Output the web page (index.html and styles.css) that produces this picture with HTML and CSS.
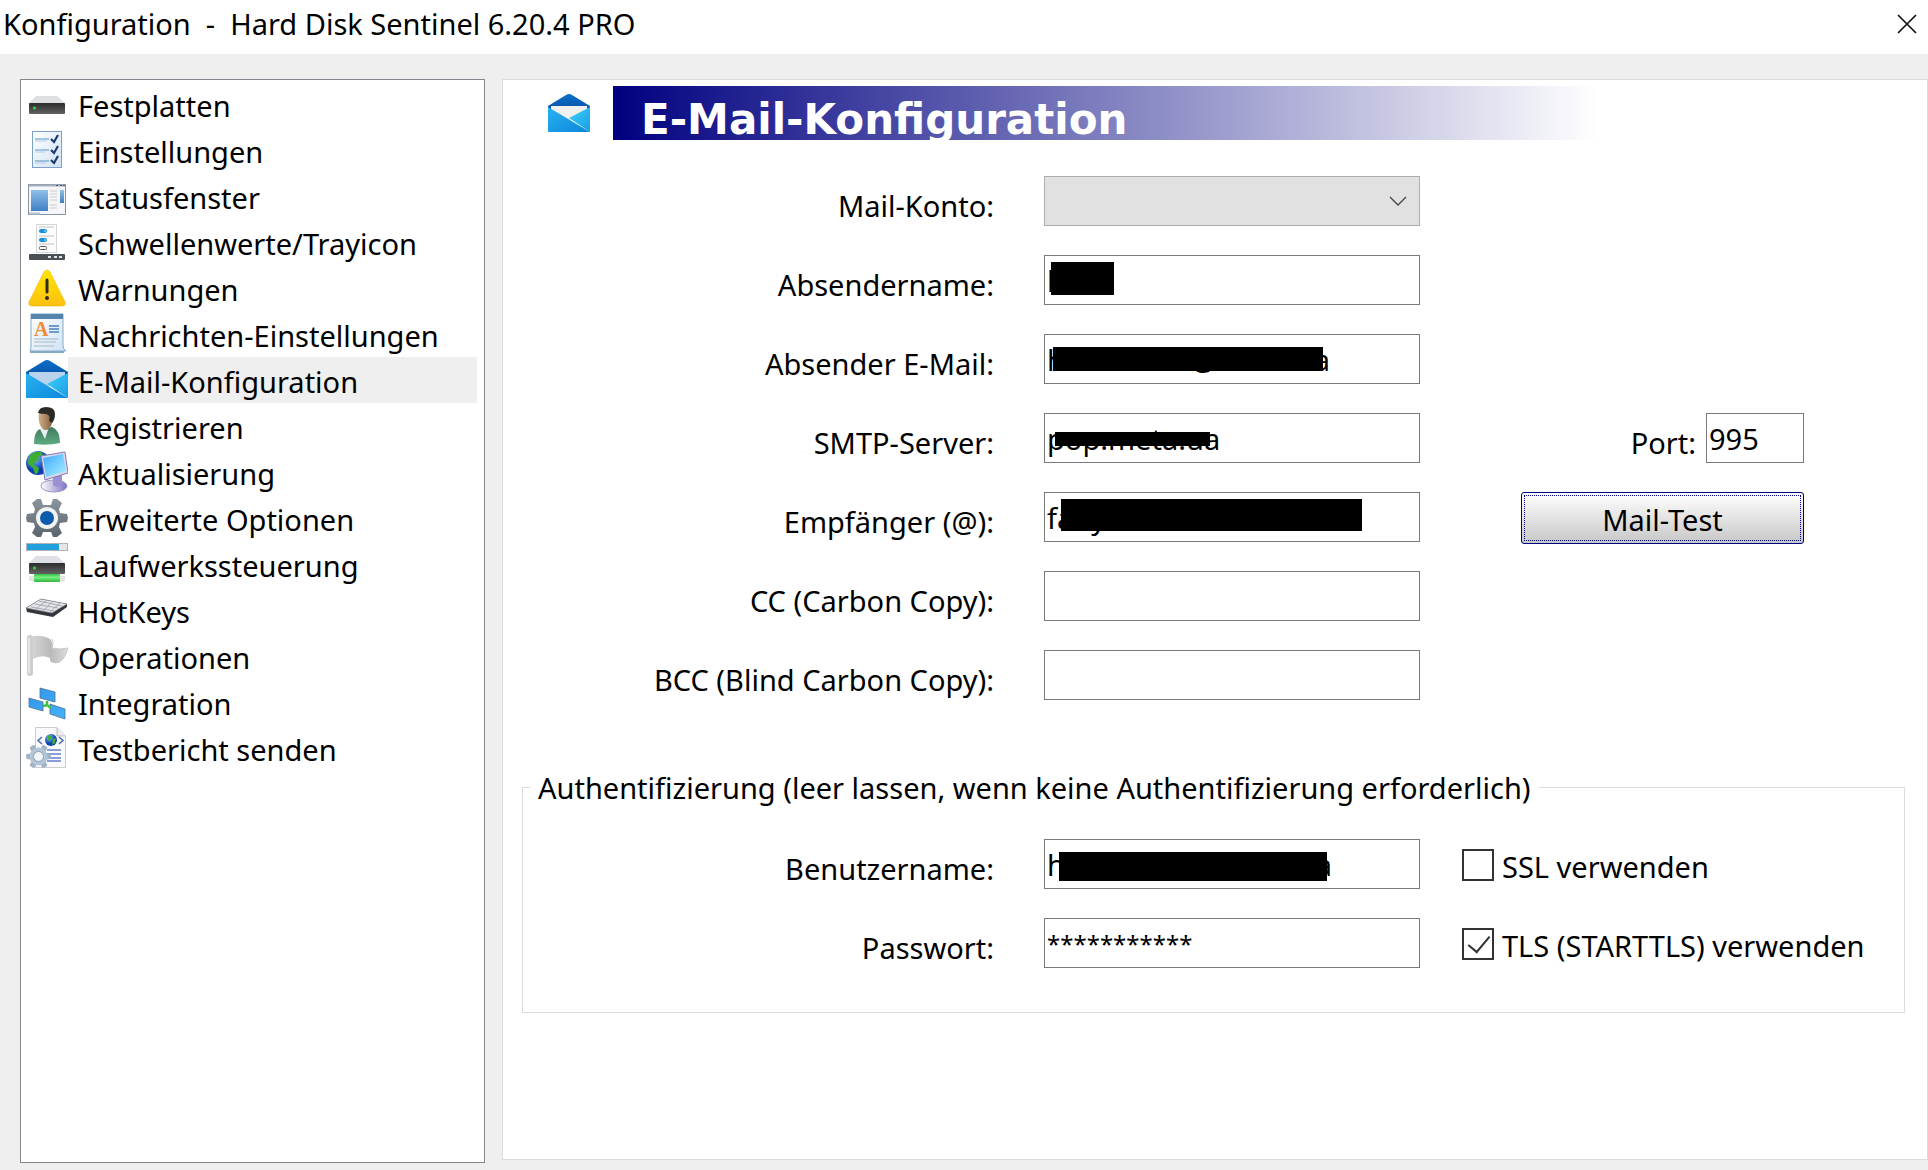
FILE: index.html
```html
<!DOCTYPE html>
<html lang="de">
<head>
	<meta charset="utf-8">
	<meta name="viewport" content="width=device-width, initial-scale=1.0">
	<title>Konfiguration - Hard Disk Sentinel 6.20.4 PRO</title>
	<link rel="stylesheet" href="styles.css">
</head>
<body>
	<!-- shared gradients and symbols -->
	<svg class="defs" aria-hidden="true">
		<defs>
			<linearGradient id="g-dark" x2="0" y2="1"><stop stop-color="#2b2b2b"/><stop offset="1" stop-color="#636363"/></linearGradient>
			<linearGradient id="g-paper" x2="1" y2="1"><stop stop-color="#fff"/><stop offset="1" stop-color="#cfe2f4"/></linearGradient>
			<linearGradient id="g-blue" x2="0" y2="1"><stop stop-color="#8fc0e8"/><stop offset="1" stop-color="#3f80c4"/></linearGradient>
			<linearGradient id="g-warn" x2="0" y2="1"><stop stop-color="#ffe600"/><stop offset="1" stop-color="#fdc011"/></linearGradient>
			<linearGradient id="g-mail" x2="1" y2="1"><stop stop-color="#28b3ef"/><stop offset="1" stop-color="#0d86dc"/></linearGradient>
			<linearGradient id="g-mail2" x2="1" y2="1"><stop stop-color="#3cd2f8"/><stop offset="1" stop-color="#1a9be6"/></linearGradient>
			<linearGradient id="g-lid" x2="0" y2="1"><stop stop-color="#0a70cc"/><stop offset="1" stop-color="#084f9e"/></linearGradient>
			<linearGradient id="g-skin"><stop stop-color="#d3ae88"/><stop offset="1" stop-color="#7b5a3c"/></linearGradient>
			<linearGradient id="g-shirt" x2="0" y2="1"><stop stop-color="#3f7a5c"/><stop offset="1" stop-color="#5fab82"/></linearGradient>
			<radialGradient id="g-globe" cx=".35" cy=".3"><stop stop-color="#7fc4ff"/><stop offset="1" stop-color="#0b3fb0"/></radialGradient>
			<linearGradient id="g-screen" x2="1" y2="1"><stop stop-color="#3fa9ff"/><stop offset="1" stop-color="#a8f0ff"/></linearGradient>
			<linearGradient id="g-stand"><stop stop-color="#fff"/><stop offset="1" stop-color="#7d70c4"/></linearGradient>
			<linearGradient id="g-gear" x2="0" y2="1"><stop stop-color="#8b959d"/><stop offset="1" stop-color="#5a646c"/></linearGradient>
			<linearGradient id="g-green" x2="0" y2="1"><stop stop-color="#2fbf40"/><stop offset=".4" stop-color="#7af283"/><stop offset="1" stop-color="#2eb53c"/></linearGradient>
			<linearGradient id="g-flag"><stop stop-color="#d4d4d4"/><stop offset=".5" stop-color="#bababa"/><stop offset="1" stop-color="#dcdcdc"/></linearGradient>
			<linearGradient id="g-tile" x2="1" y2="1"><stop stop-color="#2f95ec"/><stop offset="1" stop-color="#45b3fb"/></linearGradient>
		</defs>
		<symbol id="drive" viewBox="0 0 36 18">
			<path d="M7 0H28L36 7H0Z" fill="#dfe0e3"/>
			<rect y="7" width="36" height="11" rx="1" fill="url(#g-dark)"/>
			<circle cx="5.500" cy="12" r="1.600" fill="#27dc35"/>
		</symbol>
		<symbol id="mail" viewBox="0 0 42 38">
			<path d="M0 12L18 1Q21-1 24 1L42 12V15L38 18H4L0 15Z" fill="url(#g-lid)"/>
			<path d="M3 12H39V16L21 28L3 16Z" fill="currentColor"/>
			<path d="M0 13L42 38H0Z" fill="url(#g-mail)"/>
			<path d="M42 13V38L21 24Z" fill="url(#g-mail2)"/>
		</symbol>
		<symbol id="gear" viewBox="-21 -21 42 42">
			<path d="M-4-13L-6-19L-10-19L-15-15L-12-9L-13-5L-20-4L-21 0L-20 4L-13 5L-12 9L-15 15L-10 19L-6 19L-4 14H4L6 19L10 19L15 15L12 9L13 5L20 4L21 0L20-4L13-5L12-9L15-15L10-19L6-19L4-13Z"/>
		</symbol>
	</svg>

	<header class="titlebar">
		<h1>Konfiguration&nbsp; -&nbsp; Hard Disk Sentinel 6.20.4 PRO</h1>
		<button class="close" type="button" aria-label="Schließen">
			<svg width="20" height="20" viewBox="0 0 20 20"><path d="M1 1L19 19M19 1L1 19" stroke="#111" stroke-width="1.700"/></svg>
		</button>
	</header>

	<main class="window">
		<nav class="sidebar">
			<a href="#festplatten">
				<svg class="icon" viewBox="0 0 42 42"><use href="#drive" x="3" y="13" width="36" height="18"/></svg>
				<span>Festplatten</span>
			</a>
			<a href="#einstellungen">
				<svg class="icon" viewBox="0 0 42 42">
					<rect x="6.500" y="2.500" width="29" height="36" fill="url(#g-paper)" stroke="#7ba0c8"/>
					<path d="M9 10H23M9 21H23M9 32H23" stroke="#5b91c4" stroke-width="1.200"/>
					<path d="M9 12H21M9 23H19M9 34H20" stroke="#b5cde4"/>
					<path d="M25 10L28 13L32 6M25 21L28 24L32 17M25 31L28 34L32 27" fill="none" stroke="#1d3a6e" stroke-width="2.200"/>
				</svg>
				<span>Einstellungen</span>
			</a>
			<a href="#statusfenster">
				<svg class="icon" viewBox="0 0 42 42">
					<rect x="2.500" y="9.500" width="37" height="30" fill="#f4f6f9" stroke="#8694a6"/>
					<path d="M3 10.500H39" stroke="#a5b0be" stroke-width="2"/>
					<path d="M30 10.500H32M34 10.500H36M37 10.500H39" stroke="#4c5c70"/>
					<rect x="5" y="15" width="17" height="21" fill="url(#g-blue)"/>
					<path d="M24 16H31M24 19H31M24 22H31M24 25H31M24 30H31M24 33H31" stroke="#ccc"/>
					<rect x="34" y="15" width="4" height="13" fill="url(#g-blue)"/>
					<path d="M3 38.500H14" stroke="#b9c4d2" stroke-width="2"/>
				</svg>
				<span>Statusfenster</span>
			</a>
			<a href="#schwellenwerte">
				<svg class="icon" viewBox="0 0 42 42">
					<rect x="10.500" y="3.500" width="20" height="28" fill="#fbfbfb" stroke="#d5d5d5"/>
					<path d="M13 6H28M13 15H28M13 23H28" stroke="#c4c4c4"/>
					<rect x="13" y="8" width="8" height="4" rx="2" fill="#1490df"/>
					<rect x="13" y="17" width="8" height="4" rx="2" fill="#1490df"/>
					<path d="M18 10H20M18 19H20" stroke="#bfe6ff"/>
					<rect x="13.500" y="25.500" width="7" height="3" rx="1" fill="#fff" stroke="#555"/>
					<rect x="3" y="33" width="36" height="6" rx="1" fill="#4b5055"/>
					<path d="M22 36H25M28 36H31M33 36H36" stroke="#dfe3e6" stroke-width="2"/>
				</svg>
				<span>Schwellenwerte/Trayicon</span>
			</a>
			<a href="#warnungen">
				<svg class="icon" viewBox="0 0 42 42">
					<path d="M18 5Q21 1 24 5L39 35Q40 39 36 39H6Q2 39 3 35Z" fill="url(#g-warn)" stroke="#f0b400" stroke-width=".6"/>
					<path d="M21 13V25" stroke="#2c2c22" stroke-width="3" stroke-linecap="round"/>
					<circle cx="21" cy="31" r="2" fill="#2c2c22"/>
				</svg>
				<span>Warnungen</span>
			</a>
			<a href="#nachrichten">
				<svg class="icon" viewBox="0 0 42 42">
					<path d="M5 1H37V33Q37 36 40 38H4Q5 36 5 33Z" fill="url(#g-paper)" stroke="#84aac9"/>
					<rect x="5" y="1" width="32" height="5" fill="#5585ac"/>
					<text x="8" y="23" class="glyph-a">A</text>
					<path d="M23 13H33M23 16H33M23 19H33" stroke="#4a7fc0" stroke-width="1.500"/>
					<path d="M8 26H32M8 29H30M8 33H28" stroke="#a6b7c6"/>
					<path d="M4 39H38" stroke="#86a9c4" stroke-width="2"/>
				</svg>
				<span>Nachrichten-Einstellungen</span>
			</a>
			<a href="#email" class="selected" aria-current="page">
				<svg class="icon mail-small" viewBox="0 0 42 42"><use href="#mail" y="1" width="42" height="38"/></svg>
				<span>E-Mail-Konfiguration</span>
			</a>
			<a href="#registrieren">
				<svg class="icon" viewBox="0 0 42 42">
					<path d="M8 39Q8 26 14 24L26 22Q34 25 34 38Q22 41 8 39Z" fill="url(#g-shirt)"/>
					<path d="M14 24L23 22L19 34Z" fill="#e8f1f3"/>
					<path d="M13 7Q16 3 24 5Q30 12 26 18Q24 26 18 25Q11 20 13 7Z" fill="url(#g-skin)"/>
					<path d="M12 8Q13 2 20 2Q29 2 29 9Q29 15 26 18L23 16Q25 10 20 9Q15 9 12 8Z" fill="#2c2a28"/>
				</svg>
				<span>Registrieren</span>
			</a>
			<a href="#aktualisierung">
				<svg class="icon" viewBox="0 0 42 42">
					<circle cx="12" cy="12" r="12" fill="url(#g-globe)"/>
					<path d="M3 5Q8 0 15 1L17 4L12 6L13 9L9 11L8 14L13 17L12 22L9 23L7 17L2 13Z" fill="#3fae35"/>
					<path d="M18 3L22 6L20 10Z" fill="#4fc043"/>
					<ellipse cx="28" cy="35" rx="13" ry="6" fill="url(#g-stand)" stroke="#9a96bd"/>
					<path d="M27 26L36 24V34Q31 38 27 34Z" fill="#9a90d2"/>
					<path d="M15 5L39 1L42 22L19 29Z" fill="#d9d8ee" stroke="#807ab0"/>
					<path d="M17 7L37 3L40 20L20 26Z" fill="url(#g-screen)"/>
				</svg>
				<span>Aktualisierung</span>
			</a>
			<a href="#optionen">
				<svg class="icon" viewBox="0 0 42 42">
					<use href="#gear" width="42" height="42" fill="url(#g-gear)"/>
					<circle cx="21" cy="21" r="11" fill="#f1f2f3"/>
					<circle cx="21" cy="21" r="7" fill="#0b5cad"/>
				</svg>
				<span>Erweiterte Optionen</span>
			</a>
			<a href="#laufwerk">
				<svg class="icon" viewBox="0 0 42 42">
					<rect x=".5" y=".5" width="41" height="7" fill="#e6e6e6" stroke="#aeb3b6"/>
					<rect x="1" y="1" width="32" height="6" fill="#22a0dc"/>
					<use href="#drive" x="3" y="13" width="36" height="18"/>
					<rect x="3" y="33" width="36" height="5" fill="#e4e4e4"/>
					<rect x="8" y="31" width="26" height="8" rx="1" fill="url(#g-green)"/>
				</svg>
				<span>Laufwerkssteuerung</span>
			</a>
			<a href="#hotkeys">
				<svg class="icon" viewBox="0 0 42 42">
					<path d="M0 19L15 10L41 15V18L27 28L1 23Z" fill="#33363c"/>
					<path d="M0 19L15 10L41 15L26 24Z" fill="#e4e5e9" stroke="#70747c" stroke-width=".6"/>
					<path d="M5 18L28 22M9 15L32 19M13 12L36 17M10 20L21 11M17 22L27 12M24 23L34 14" stroke="#9a9da4" stroke-width=".8"/>
				</svg>
				<span>HotKeys</span>
			</a>
			<a href="#operationen">
				<svg class="icon" viewBox="0 0 42 42">
					<path d="M7 1Q17 0 24 4Q27 7 26 13Q34 15 42 13Q38 28 29 28Q23 28 24 23Q16 19 7 24Z" fill="url(#g-flag)"/>
					<path d="M26 4Q28 8 26 13Q34 15 42 13Q38 28 29 28" fill="none" stroke="#c8c8c8"/>
					<rect x="1" y="0" width="6" height="41" rx="3" fill="#cecece"/>
					<path d="M3 3V38" stroke="#e6e6e6" stroke-width="2"/>
				</svg>
				<span>Operationen</span>
			</a>
			<a href="#integration">
				<svg class="icon" viewBox="0 0 42 42">
					<path d="M14 7L29 11V21L14 17ZM3 17L17 21V30L3 26ZM24 23L39 28V38L24 33Z" fill="url(#g-tile)" stroke="#52708c" stroke-width=".8"/>
					<path d="M21 20V24M17 25L21 24L25 27" fill="none" stroke="#3fc046" stroke-width="2.500"/>
				</svg>
				<span>Integration</span>
			</a>
			<a href="#testbericht">
				<svg class="icon" viewBox="0 0 42 42">
					<path d="M9.500.5H31L39.500 9V40.500H9.500Z" fill="#fafafc" stroke="#ccc"/>
					<path d="M31 1V9H39" fill="#eee" stroke="#bbb"/>
					<circle cx="25" cy="13" r="6" fill="url(#g-globe)"/>
					<path d="M21 9L26 8L25 12L22 14ZM27 12L30 11L29 16L26 18Z" fill="#3fae35"/>
					<path d="M16 10L12 13.500L16 17M33 10L37 13.500L33 17" fill="none" stroke="#4b68c0" stroke-width="1.500"/>
					<path d="M21 23H35M21 27H35M21 31H35M21 34H35" stroke="#6480cc" stroke-width="1.500"/>
					<use href="#gear" y="17" width="25" height="25" fill="#9fb4c6"/>
					<circle cx="12.500" cy="29.500" r="9" fill="#b4c6d6"/>
					<circle cx="12.500" cy="29.500" r="5" fill="#f3f6fa" stroke="#8aa1b6"/>
				</svg>
				<span>Testbericht senden</span>
			</a>
		</nav>

		<section class="panel">
			<div class="panel-head">
				<svg class="mail-big" width="42" height="38"><use href="#mail" width="42" height="38"/></svg>
				<h2>E-Mail-Konfiguration</h2>
			</div>

			<form>
				<div class="rows">
					<label for="konto">Mail-Konto:</label>
					<div class="field">
						<select id="konto" disabled><option></option></select>
						<svg class="chevron" width="18" height="10" viewBox="0 0 18 10"><path d="M1 1L9 9L17 1" fill="none" stroke="#444" stroke-width="1.300"/></svg>
					</div>
					<div></div>

					<label for="name">Absendername:</label>
					<div class="field"><input id="name" type="text" value="l"><span class="mask mask-name"></span></div>
					<div></div>

					<label for="email">Absender E-Mail:</label>
					<div class="field"><input id="email" type="text" value="hnnnnnnn@nnnnn.a"><span class="mask mask-email"></span></div>
					<div></div>

					<label for="smtp">SMTP-Server:</label>
					<div class="field"><input id="smtp" type="text" value="pop.meta.ua"><span class="mask mask-smtp"></span></div>
					<div class="side">
						<label for="port">Port:</label>
						<input id="port" class="port" type="text" value="995">
					</div>

					<label for="empf">Empfänger (@):</label>
					<div class="field"><input id="empf" type="text" value="fanynn@nnnnnn"><span class="mask mask-empf"></span></div>
					<div class="side"><button class="test" type="button"><span>Mail-Test</span></button></div>

					<label for="cc">CC (Carbon Copy):</label>
					<div class="field"><input id="cc" type="text"></div>
					<div></div>

					<label for="bcc">BCC (Blind Carbon Copy):</label>
					<div class="field"><input id="bcc" type="text"></div>
					<div></div>
				</div>

				<fieldset>
					<legend>Authentifizierung (leer lassen, wenn keine Authentifizierung erforderlich)</legend>
					<div class="rows rows-auth">
						<label for="user">Benutzername:</label>
						<div class="field"><input id="user" type="text" value="hnnnnnnnnnnnnnna"><span class="mask mask-user"></span></div>
						<label class="check"><input type="checkbox"><span>SSL verwenden</span></label>

						<label for="pass">Passwort:</label>
						<div class="field"><input id="pass" class="stars" type="text" value="***********"></div>
						<label class="check"><input type="checkbox" checked><span>TLS (STARTTLS) verwenden</span></label>
					</div>
				</fieldset>
			</form>
		</section>
	</main>
</body>
</html>
```
FILE: styles.css
```css
* {
	box-sizing: border-box;
}
body {
	margin: 0;
	min-height: 100vh;
	display: flex;
	flex-direction: column;
	background: #efefef;
	color: #000;
	font-family: "Noto Sans", "Open Sans", sans-serif;
	font-size: 29px;
	line-height: 40px;
}
input, select, button {
	font: inherit;
	color: inherit;
}
.defs {
	position: absolute;
	width: 0;
	height: 0;
}

/* title bar */
.titlebar {
	display: flex;
	justify-content: space-between;
	align-items: center;
	height: 54px;
	padding: 0 11px 6px 3px;
	background: #fff;
}
.titlebar h1 {
	margin: 0;
	font-size: 29px;
	font-weight: normal;
}
.close {
	display: flex;
	padding: 0;
	border: 0;
	background: none;
}

.window {
	flex: 1;
	display: flex;
	gap: 17px;
	padding: 25px 0 7px 20px;
}

/* page list */
.sidebar {
	flex: 0 0 465px;
	padding: 1px 7px 1px 5px;
	border: 1px solid #828790;
	background: #fff;
}
.sidebar a {
	display: flex;
	align-items: center;
	height: 46px;
	color: inherit;
	text-decoration: none;
	white-space: nowrap;
}
.sidebar span {
	flex: 1;
	padding: 5px 0 1px 10px;
}
.sidebar .selected span {
	background: #efefef;
}
.icon {
	flex: none;
	width: 42px;
	height: 42px;
}
.mail-small {
	color: #b9d3ec;
}
.mail-big {
	color: #f0f0f0;
}
.glyph-a {
	font: bold 20px "Liberation Serif", serif;
	fill: #f08a35;
}

/* settings page */
.panel {
	flex: 1;
	margin-bottom: 3px;
	border: 1px solid #dcdcdc;
	background: #fff;
}
.panel-head {
	display: flex;
	align-items: center;
	gap: 23px;
	padding: 6px 0 0 45px;
}
.panel-head h2 {
	flex: 1;
	height: 54px;
	margin: 0;
	padding: 7px 0 0 28px;
	background: linear-gradient(to right, #000080, #fff 75%);
	color: #fff;
	font: bold 42px/54px "DejaVu Sans", sans-serif;
}
.rows {
	display: grid;
	grid-template-columns: 491px 376px 1fr;
	column-gap: 50px;
	row-gap: 29px;
	padding-top: 36px;
}
.rows > div:nth-child(3n), .check {
	margin-left: -8px;
}
.rows > label {
	height: 50px;
	padding-top: 10px;
	text-align: right;
	white-space: nowrap;
}
.field {
	position: relative;
}
.field input, .field select, .port {
	display: block;
	width: 100%;
	height: 50px;
	margin: 0;
	padding: 0 2px;
	border: 1px solid #7a7a7a;
	border-radius: 0;
	background: #fff;
}
.field select {
	appearance: none;
	border-color: #adadad;
	background: #e1e1e1;
	opacity: 1;
}
.field .stars {
	font-size: 24px;
}
.chevron {
	position: absolute;
	right: 13px;
	top: 20px;
}

/* blacked out values */
.mask {
	position: absolute;
	background: #000;
}
.mask-name {
	left: 7px;
	top: 7px;
	width: 63px;
	height: 33px;
}
.mask-email {
	left: 9px;
	top: 13px;
	width: 270px;
	height: 24px;
}
.mask-smtp {
	left: 11px;
	top: 19px;
	width: 155px;
	height: 14px;
}
.mask-empf {
	left: 17px;
	top: 7px;
	width: 301px;
	height: 32px;
}
.mask-user {
	left: 15px;
	top: 13px;
	width: 268px;
	height: 29px;
}

.side {
	display: flex;
	justify-content: flex-end;
	gap: 10px;
	padding-right: 123px;
}
.side label {
	padding-top: 10px;
}
.side .port {
	width: 98px;
}
.test {
	width: 283px;
	height: 52px;
	margin-bottom: -2px;
	padding: 2px;
	border: 1px solid #000080;
	border-radius: 3px;
	background: linear-gradient(#fff, #c8c8c8);
}
.test span {
	display: block;
	height: 46px;
	padding-top: 4px;
	border: 1px dotted #000080;
}

/* authentication group */
fieldset {
	min-width: 0;
	margin: 66px 22px 0 19px;
	padding: 0 0 44px;
	border: 1px solid #dcdcdc;
}
legend {
	margin-left: 7px;
	padding: 2px 8px 0;
	white-space: nowrap;
}
.rows-auth {
	grid-template-columns: 471px 376px 1fr;
	padding-top: 31px;
}
.rows .check {
	display: flex;
	gap: 8px;
	padding-top: 8px;
	text-align: left;
}
.check input {
	appearance: none;
	flex: none;
	width: 32px;
	height: 32px;
	margin: 2px 0 0;
	border: 2px solid #333;
	background: #fff;
}
.check input:checked::before {
	content: "";
	display: block;
	width: 10px;
	height: 19px;
	margin: 1px 0 0 9px;
	border: solid #333;
	border-width: 0 2px 2px 0;
	transform: rotate(40deg);
}
```
